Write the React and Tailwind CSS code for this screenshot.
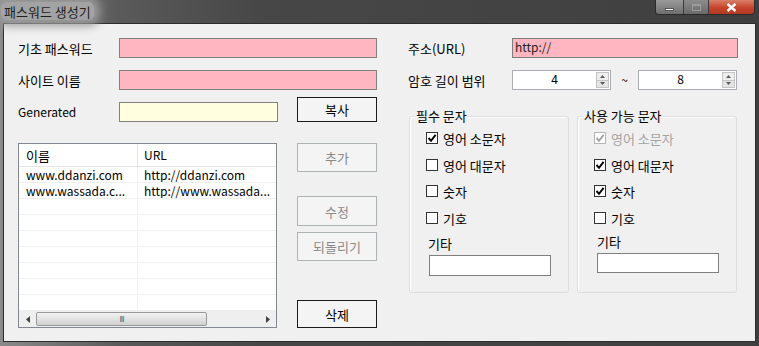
import React from "react";

const rows = [
	{ name: "www.ddanzi.com", url: "http://ddanzi.com" },
	{ name: "www.wassada.c...", url: "http://www.wassada..." },
];

const CheckMark = () => (
	<svg width="10" height="10" viewBox="0 0 10 10">
		<path d="M1.5 5 L4 7.8 L8.6 1.8" fill="none" stroke="currentColor" strokeWidth="1.9" />
	</svg>
);

const Check = ({ label, checked, disabled }) => (
	<div className={`flex items-center h-[16px] ${disabled ? "text-[#a3a3a3]" : "text-black"}`}>
		<span
			className={`w-[12px] h-[12px] border bg-white flex items-center justify-center ${
				disabled ? "border-[#b4b4b4]" : "border-[#333333]"
			}`}
		>
			{checked && <CheckMark />}
		</span>
		<span className="ml-[5px] leading-none">{label}</span>
	</div>
);

const Button = ({ label, disabled, h = "h-[29px]", className = "" }) => (
	<div
		className={`w-[80px] ${h} border flex items-center justify-center bg-[#f4f4f4] leading-none ${
			disabled ? "border-[#adb2b5] text-[#8a8a8a]" : "border-[#1a1a1a] text-black"
		} ${className}`}
	>
		{label}
	</div>
);

const Spinner = ({ value }) => (
	<div className="w-[99px] h-[20px] border border-[#abadb3] bg-white flex text-[12px]">
		<div className="flex-1 flex items-center justify-center leading-none pb-[2px]">{value}</div>
		<div className="w-[13px] flex flex-col my-[1px] mr-[1px]">
			<div className="flex-1 border border-[#c4c4c4] bg-[#eeeeee] flex items-center justify-center">
				<svg width="5" height="3" viewBox="0 0 5 3">
					<path d="M0 3 L2.5 0 L5 3 Z" fill="#5a5a5a" />
				</svg>
			</div>
			<div className="flex-1 border border-[#c4c4c4] border-t-0 bg-[#e4e4e4] flex items-center justify-center">
				<svg width="5" height="3" viewBox="0 0 5 3">
					<path d="M0 0 L2.5 3 L5 0 Z" fill="#5a5a5a" />
				</svg>
			</div>
		</div>
	</div>
);

const Group = ({ title, children, className = "" }) => (
	<div className={`relative w-[160px] h-[177px] border border-[#dcdfe1] rounded-[3px] shadow-[inset_1px_1px_0_#ffffff] ${className}`}>
		<span className="absolute -top-[9px] left-[5px] bg-[#f0f0f0] px-[1px] leading-[16px]">{title}</span>
		{children}
	</div>
);

export default function App() {
	return (
		<div className="w-[759px] h-[346px] overflow-hidden bg-[linear-gradient(to_right,#8a8a8a_0px,#5a5a5a_120px,#474747_260px,#3f3f3f_100%)] text-[13px] text-black font-['Noto_Sans_CJK_KR','Noto_Sans',sans-serif]">
			{/* title bar */}
			<div className="h-[23px] flex items-start justify-between">
				<div className="ml-[1px] mt-[2px] px-[3px] h-[18px] flex items-center bg-[#a3a3a3] rounded-[6px] shadow-[0_0_10px_6px_#9a9a9a] text-[#1f1f1f] leading-none">
					패스워드 생성기
				</div>
				<div className="flex h-[15px] mr-[4px] border border-t-0 border-[#2b2b2b] rounded-b-[4px] overflow-hidden">
					<div className="w-[27px] bg-[linear-gradient(#9a9a9a,#6e6e6e)] flex items-end justify-center pb-[3px]">
						<span className="w-[9px] h-[3px] bg-white border border-[#555]" />
					</div>
					<div className="w-[25px] border-l border-[#3a3a3a] bg-[linear-gradient(#8c8c8c,#6a6a6a)] flex items-center justify-center">
						<span className="w-[9px] h-[7px] border border-[#9c9c9c] border-t-2" />
					</div>
					<div className="w-[46px] border-l border-[#3a3a3a] bg-[linear-gradient(#d9806a,#c6432b_55%,#b23a24)] flex items-center justify-center">
						<svg width="11" height="9" viewBox="0 0 11 9">
							<path d="M1.5 1 L9.5 8 M9.5 1 L1.5 8" stroke="#ffffff" strokeWidth="2.4" />
						</svg>
					</div>
				</div>
			</div>

			{/* client area */}
			<div className="mx-[3px] h-[319px] border border-[#2c2c2c] bg-[#f0f0f0] flex pt-[14px] pl-[14px]">
				{/* left column */}
				<div className="w-[359px] flex flex-col">
					<div className="flex items-center h-[20px]">
						<span className="w-[101px] leading-none">기초 패스워드</span>
						<div className="w-[258px] h-[20px] bg-[#ffb6c1] border border-[#7f7f7f]" />
					</div>
					<div className="flex items-center h-[20px] mt-[12px]">
						<span className="w-[101px] leading-none">사이트 이름</span>
						<div className="w-[258px] h-[20px] bg-[#ffb6c1] border border-[#7f7f7f]" />
					</div>
					<div className="flex items-end h-[25px] mt-[7px]">
						<div className="w-[101px] h-[20px] flex items-center leading-none text-[12px]">Generated</div>
						<div className="w-[159px] h-[20px] bg-[#ffffe0] border border-[#7f7f7f]" />
						<Button label="복사" h="h-[25px]" className="ml-[19px]" />
					</div>
					<div className="flex mt-[21px]">
						{/* list view */}
						<div className="w-[259px] h-[185px] border border-[#828790] bg-white flex flex-col">
							<div className="h-[23px] flex border-b border-[#e5e5e5]">
								<div className="w-[119px] pl-[7px] flex items-center border-r border-[#e3e3e3] leading-none">이름</div>
								<div className="flex-1 pl-[6px] flex items-center leading-none text-[12px]">URL</div>
							</div>
							<div className="flex-1 flex flex-col text-[12px]">
								{Array.from({ length: 9 }).map((_, i) => (
									<div key={i} className="h-[16px] flex border-b border-[#f0f0f0]">
										<div className="w-[119px] pl-[7px] flex items-center border-r border-[#f0f0f0] leading-none whitespace-nowrap overflow-hidden">
											{rows[i] ? rows[i].name : ""}
										</div>
										<div className="flex-1 pl-[6px] flex items-center leading-none whitespace-nowrap overflow-hidden">
											{rows[i] ? rows[i].url : ""}
										</div>
									</div>
								))}
							</div>
							{/* horizontal scrollbar */}
							<div className="h-[16px] bg-[#efefef] flex items-center">
								<div className="w-[17px] flex items-center justify-center">
									<svg width="4" height="7" viewBox="0 0 4 7">
										<path d="M4 0 L0 3.5 L4 7 Z" fill="#404040" />
									</svg>
								</div>
								<div className="w-[171px] h-[14px] border border-[#989898] rounded-[2px] bg-[linear-gradient(#f2f2f2,#e2e2e2_50%,#d0d0d0)] flex items-center justify-center">
									<span className="text-[8px] leading-none text-[#555] tracking-[-1px]">III</span>
								</div>
								<div className="flex-1" />
								<div className="w-[17px] flex items-center justify-center">
									<svg width="4" height="7" viewBox="0 0 4 7">
										<path d="M0 0 L4 3.5 L0 7 Z" fill="#404040" />
									</svg>
								</div>
							</div>
						</div>
						{/* buttons */}
						<div className="ml-[20px] flex flex-col">
							<Button label="추가" disabled />
							<Button label="수정" disabled h="h-[30px]" className="mt-[24px]" />
							<Button label="되돌리기" disabled className="mt-[6px]" />
							<Button label="삭제" h="h-[28px]" className="mt-[39px]" />
						</div>
					</div>
				</div>

				{/* right column */}
				<div className="ml-[31px] w-[330px] flex flex-col">
					<div className="flex items-center h-[20px]">
						<span className="w-[104px] leading-none">주소(URL)</span>
						<div className="w-[226px] h-[20px] bg-[#ffb6c1] border border-[#7f7f7f] flex items-center px-[2px] leading-none text-[#222] text-[12px] pb-[2px]">
							http://
						</div>
					</div>
					<div className="flex items-center h-[20px] mt-[12px]">
						<span className="w-[104px] leading-none">암호 길이 범위</span>
						<Spinner value="4" />
						<span className="w-[27px] text-center leading-none text-[12px]">~</span>
						<Spinner value="8" />
					</div>
					<div className="flex mt-[26px] ml-[1px]">
						<Group title="필수 문자">
							<div className="pl-[16px] pt-[13px] flex flex-col">
								<Check label="영어 소문자" checked />
								<div className="mt-[11px]"><Check label="영어 대문자" /></div>
								<div className="mt-[10px]"><Check label="숫자" /></div>
								<div className="mt-[11px]"><Check label="기호" /></div>
								<span className="mt-[9px] ml-[2px] h-[16px] flex items-center leading-none">기타</span>
								<div className="mt-[4px] ml-[3px] w-[122px] h-[21px] bg-white border border-[#7f7f7f]" />
							</div>
						</Group>
						<Group title="사용 가능 문자" className="ml-[8px]">
							<div className="pl-[16px] pt-[13px] flex flex-col">
								<Check label="영어 소문자" checked disabled />
								<div className="mt-[11px]"><Check label="영어 대문자" checked /></div>
								<div className="mt-[10px]"><Check label="숫자" checked /></div>
								<div className="mt-[11px]"><Check label="기호" /></div>
								<span className="mt-[7px] ml-[3px] h-[16px] flex items-center leading-none">기타</span>
								<div className="mt-[4px] ml-[3px] w-[122px] h-[20px] bg-white border border-[#7f7f7f]" />
							</div>
						</Group>
					</div>
				</div>
			</div>
		</div>
	);
}
